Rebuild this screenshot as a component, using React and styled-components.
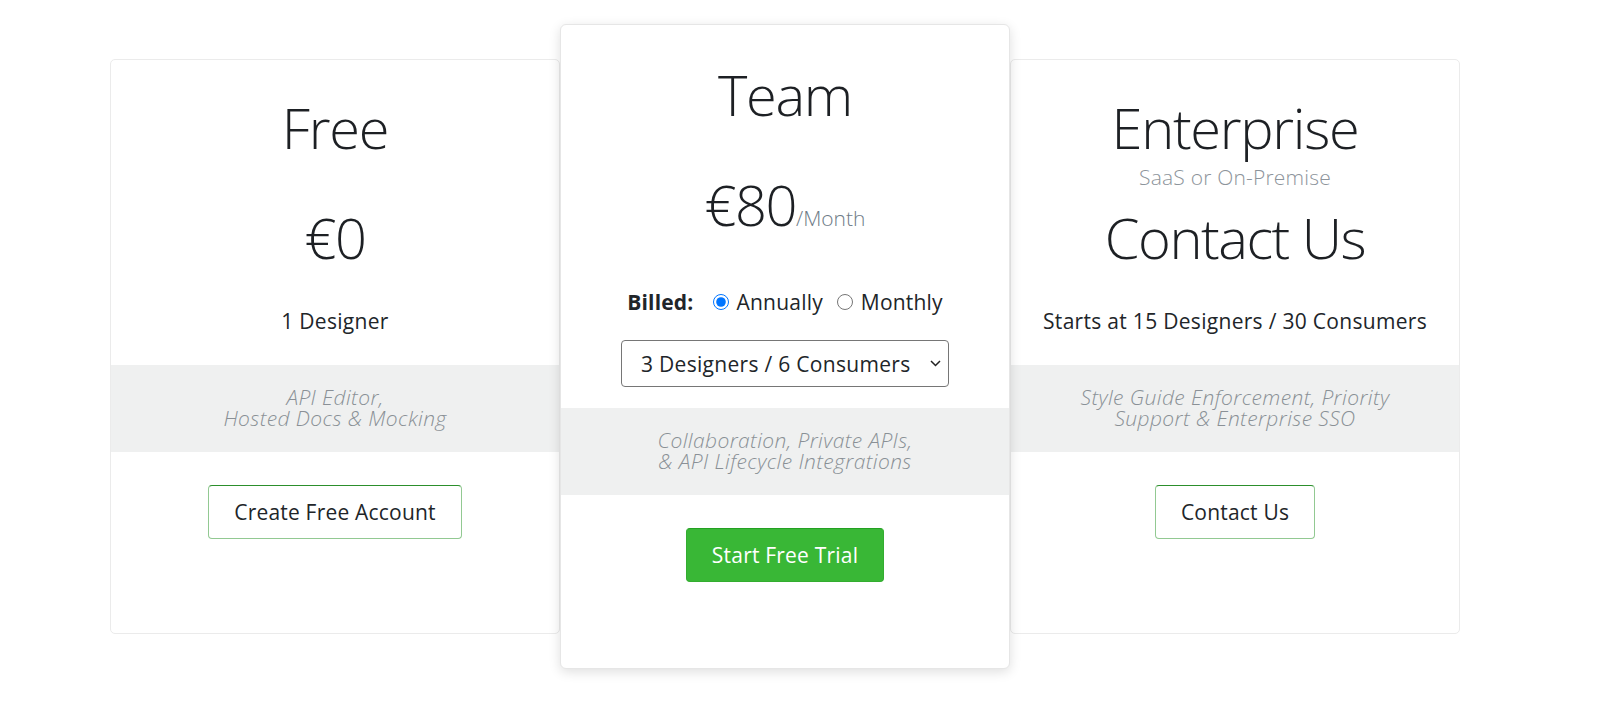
import React, { useState } from "react";
import styled, { createGlobalStyle, css } from "styled-components";

//기본 스타일 : body 여백 제거, 폰트 지정
const GlobalStyle = createGlobalStyle`
  body {
    margin: 0;
    background: #ffffff;
    font-family: "Open Sans", "Liberation Sans", sans-serif;
    color: #212529;
  }
`;

const plans = [
  {
    id: "free",
    title: "Free",
    price: "€0",
    note: "1 Designer",
    features: ["API Editor,", "Hosted Docs & Mocking"],
    cta: "Create Free Account",
  },
  {
    id: "team",
    title: "Team",
    price: "€80",
    per: "/Month",
    featured: true,
    features: ["Collaboration, Private APIs,", "& API Lifecycle Integrations"],
    cta: "Start Free Trial",
  },
  {
    id: "enterprise",
    title: "Enterprise",
    subtitle: "SaaS or On-Premise",
    price: "Contact Us",
    note: "Starts at 15 Designers / 30 Consumers",
    features: ["Style Guide Enforcement, Priority", "Support & Enterprise SSO"],
    cta: "Contact Us",
  },
];

//Billed 라디오 + 인원 선택 (Team 카드에만 있음)
const BillingOptions = () => {
  const [billing, setBilling] = useState("annually");
  const [seats, setSeats] = useState("3");

  return (
    <>
      <BilledRow>
        <BilledLabel>Billed:</BilledLabel>
        <RadioLabel>
          <Radio
            type="radio"
            name="billing"
            checked={billing === "annually"}
            onChange={() => setBilling("annually")}
          />
          Annually
        </RadioLabel>
        <RadioLabel>
          <Radio
            type="radio"
            name="billing"
            checked={billing === "monthly"}
            onChange={() => setBilling("monthly")}
          />
          Monthly
        </RadioLabel>
      </BilledRow>
      <SelectWrap>
        <SeatSelect value={seats} onChange={(e) => setSeats(e.target.value)}>
          <option value="3">3 Designers / 6 Consumers</option>
          <option value="5">5 Designers / 10 Consumers</option>
          <option value="10">10 Designers / 20 Consumers</option>
        </SeatSelect>
        <Chevron width="11" height="7" viewBox="0 0 11 7">
          <path d="M1 1l4.5 4.5L10 1" fill="none" stroke="#222" strokeWidth="1.5" />
        </Chevron>
      </SelectWrap>
    </>
  );
};

const PlanCard = ({ plan }) => {
  return (
    <Card featured={plan.featured}>
      <Header>
        <Title>{plan.title}</Title>
        {plan.subtitle && <Subtitle>{plan.subtitle}</Subtitle>}
      </Header>
      <Price>
        {plan.price}
        {plan.per && <Per>{plan.per}</Per>}
      </Price>
      {plan.featured ? <BillingOptions /> : <Note>{plan.note}</Note>}
      <Features featured={plan.featured}>
        {plan.features.map((line) => (
          <div key={line}>{line}</div>
        ))}
      </Features>
      <Button primary={plan.featured}>{plan.cta}</Button>
    </Card>
  );
};

const App = () => {
  return (
    <>
      <GlobalStyle />
      <Page>
        <Row>
          {plans.map((plan) => (
            <PlanCard key={plan.id} plan={plan} />
          ))}
        </Row>
      </Page>
    </>
  );
};

const Page = styled.div`
  padding: 24px 0 40px 110px;
`;

const Row = styled.div`
  display: flex;
  align-items: stretch;
  width: 1350px;
`;

const Card = styled.div`
  width: 450px;
  box-sizing: border-box;
  display: flex;
  flex-direction: column;
  align-items: center;
  text-align: center;
  background: #ffffff;
  border: 1px solid #ebebeb;
  border-radius: 5px;
  margin: 35px 0;
  padding-top: 34px;

  ${(props) =>
    props.featured &&
    css`
      position: relative;
      z-index: 1;
      margin: 0;
      padding-top: 36px;
      padding-bottom: 86px;
      border-color: #e6e6e6;
      border-radius: 6px;
      box-shadow: 0 3px 12px rgba(0, 0, 0, 0.13);
    `}
`;

//제목 영역 높이 고정 (부제목 유무와 관계없이 가격 위치를 맞춤)
const Header = styled.div`
  height: 110px;
  display: flex;
  flex-direction: column;
  align-items: center;
`;

const Title = styled.div`
  font-size: 56px;
  font-weight: 300;
  line-height: 67px;
  letter-spacing: -1.3px;
  color: #1d2024;
`;

const Subtitle = styled.div`
  margin-top: 4px;
  font-size: 21px;
  font-weight: 300;
  line-height: 24px;
  letter-spacing: 0.2px;
  color: #8d949b;
`;

const Price = styled.div`
  font-size: 56px;
  font-weight: 300;
  line-height: 67px;
  letter-spacing: -1.5px;
  color: #1d2024;
`;

const Per = styled.span`
  font-size: 21px;
  font-weight: 300;
  line-height: 1;
  letter-spacing: 0;
  color: #6f7c88;
`;

const Note = styled.div`
  margin-top: 35px;
  font-size: 21px;
  line-height: 30px;
  letter-spacing: 0.3px;
  color: #212529;
`;

const BilledRow = styled.div`
  display: flex;
  align-items: center;
  margin-top: 49px;
  font-size: 21px;
  line-height: 30px;
  letter-spacing: 0.2px;
  color: #212529;
`;

const BilledLabel = styled.span`
  font-weight: 700;
  margin-right: 19px;
`;

const RadioLabel = styled.label`
  display: flex;
  align-items: center;
  gap: 8px;
  margin-right: 14px;

  &:last-child {
    margin-right: 0;
  }
`;

const Radio = styled.input`
  width: 16px;
  height: 16px;
  margin: 0;
  accent-color: #0075ff;
`;

const SelectWrap = styled.div`
  position: relative;
  margin-top: 23px;
`;

const SeatSelect = styled.select`
  display: block;
  width: 328px;
  height: 47px;
  padding: 0 30px 0 19px;
  appearance: none;
  font-family: "Open Sans", "Liberation Sans", sans-serif;
  font-size: 21px;
  letter-spacing: 0.3px;
  color: #212529;
  background: #ffffff;
  border: 1px solid #767676;
  border-radius: 4px;
`;

const Chevron = styled.svg`
  position: absolute;
  right: 8px;
  top: 20px;
  pointer-events: none;
`;

const Features = styled.div`
  align-self: stretch;
  margin-top: ${(props) => (props.featured ? "21px" : "29px")};
  padding: 22px 20px 23px;
  background: #eff0f0;
  font-size: 21px;
  font-weight: 300;
  font-style: italic;
  line-height: 21px;
  letter-spacing: 0.4px;
  color: #8a9096;
`;

const Button = styled.button`
  margin-top: ${(props) => (props.primary ? "33px" : "33px")};
  padding: 11px 25px;
  font-family: "Open Sans", "Liberation Sans", sans-serif;
  font-size: 21px;
  line-height: 30px;
  letter-spacing: 0.2px;
  border-radius: 4px;
  cursor: pointer;
  color: #212529;
  background: #ffffff;
  border: 1px solid #92c992;
  border-top-color: #2c8f2c;

  ${(props) =>
    props.primary &&
    css`
      color: #ffffff;
      background: #39b736;
      border-color: #33ad30;
      border-top-color: #23a121;
    `}
`;

export default App;
